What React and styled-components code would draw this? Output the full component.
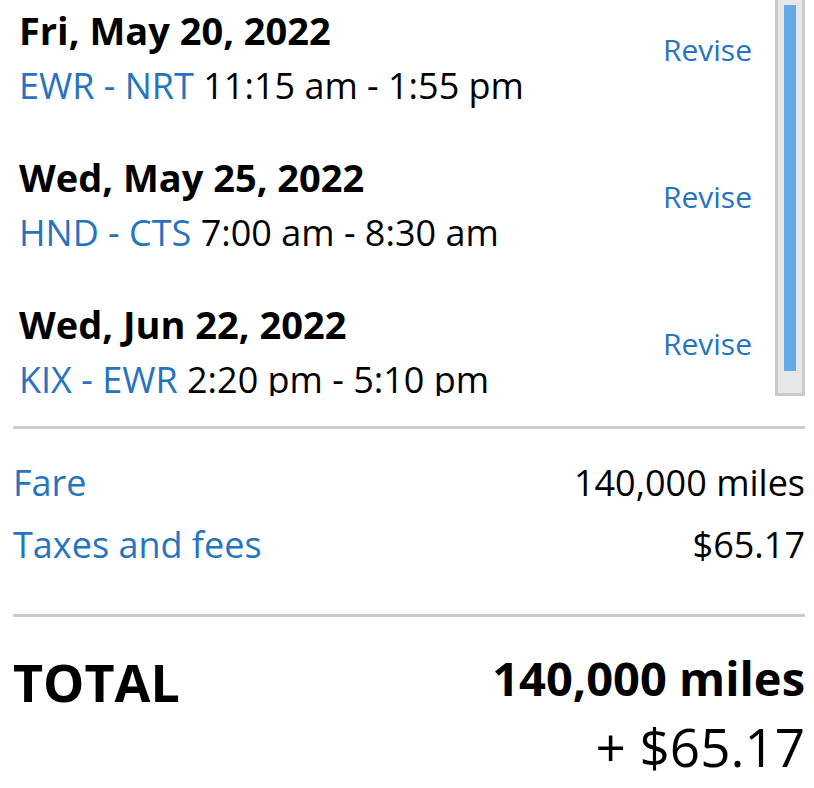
import React from "react";
import styled, { createGlobalStyle } from "styled-components";

const Global = createGlobalStyle`
  html, body { margin: 0; padding: 0; background: #fff; }
  body { font-family: "Open Sans", "Noto Sans", Arial, sans-serif; color: #000; }
`;

const BLUE = "#2673bf";

const Page = styled.div`
  width: 814px;
  box-sizing: border-box;
  padding: 0 9px 0 13px;
`;

const ItinerarySection = styled.section`
  display: flex;
  height: 396px;
`;

const Viewport = styled.div`
  flex: 1;
  overflow: hidden;
  padding: 2px 23px 0 6px;
  display: flex;
  flex-direction: column;
  gap: 35px;
`;

const Segment = styled.div`
  display: flex;
  justify-content: space-between;
  align-items: flex-start;
`;

const SegmentInfo = styled.div`
  display: flex;
  flex-direction: column;
`;

const DateLine = styled.div`
  font-size: 38px;
  line-height: 56px;
  font-weight: 700;
  white-space: nowrap;
`;

const RouteLine = styled.div`
  font-size: 36px;
  line-height: 56px;
  white-space: nowrap;
`;

const Route = styled.span`
  color: ${BLUE};
`;

const ReviseLink = styled.a`
  color: ${BLUE};
  font-size: 30px;
  line-height: 45px;
  margin-top: 25px;
  text-decoration: none;
  cursor: pointer;
`;

const ScrollTrack = styled.div`
  width: 24px;
  flex: none;
  background: #e7e7e7;
  border: 3px solid #cacaca;
  border-top: none;
  box-sizing: content-box;
  height: 393px;
  display: flex;
  justify-content: center;
`;

const ScrollThumb = styled.div`
  width: 12px;
  height: 366px;
  margin-top: 5px;
  background: #63a9e3;
`;

const Divider = styled.hr`
  border: none;
  height: 3px;
  background: #cccccc;
  margin: ${(p) => p.$top}px 0 0;
`;

const PriceList = styled.div`
  padding-top: 23px;
`;

const PriceRow = styled.div`
  display: flex;
  justify-content: space-between;
  font-size: 36px;
  line-height: 62px;
`;

const PriceLabel = styled.a`
  color: ${BLUE};
  text-decoration: none;
`;

const PriceValue = styled.span``;

const TotalRow = styled.div`
  display: flex;
  justify-content: space-between;
  align-items: flex-start;
  padding-top: 26px;
`;

const TotalLabel = styled.div`
  font-size: 52px;
  line-height: 78px;
  font-weight: 700;
`;

const TotalValues = styled.div`
  display: flex;
  flex-direction: column;
  align-items: flex-end;
`;

const TotalMiles = styled.div`
  font-size: 47px;
  line-height: 71px;
  font-weight: 700;
`;

const TotalCash = styled.div`
  font-size: 53px;
  line-height: 65px;
`;

const segments = [
  { date: "Fri, May 20, 2022", route: "EWR - NRT", time: "11:15 am - 1:55 pm" },
  { date: "Wed, May 25, 2022", route: "HND - CTS", time: "7:00 am - 8:30 am" },
  { date: "Wed, Jun 22, 2022", route: "KIX - EWR", time: "2:20 pm - 5:10 pm" },
];

export default function App() {
  return (
    <Page>
      <Global />
      <ItinerarySection>
        <Viewport>
          {segments.map((s) => (
            <Segment key={s.date}>
              <SegmentInfo>
                <DateLine>{s.date}</DateLine>
                <RouteLine>
                  <Route>{s.route}</Route> {s.time}
                </RouteLine>
              </SegmentInfo>
              <ReviseLink>Revise</ReviseLink>
            </Segment>
          ))}
        </Viewport>
        <ScrollTrack>
          <ScrollThumb />
        </ScrollTrack>
      </ItinerarySection>
      <Divider $top={30} />
      <PriceList>
        <PriceRow>
          <PriceLabel>Fare</PriceLabel>
          <PriceValue>140,000 miles</PriceValue>
        </PriceRow>
        <PriceRow>
          <PriceLabel>Taxes and fees</PriceLabel>
          <PriceValue>$65.17</PriceValue>
        </PriceRow>
      </PriceList>
      <Divider $top={38} />
      <TotalRow>
        <TotalLabel>TOTAL</TotalLabel>
        <TotalValues>
          <TotalMiles>140,000 miles</TotalMiles>
          <TotalCash>+ $65.17</TotalCash>
        </TotalValues>
      </TotalRow>
    </Page>
  );
}
